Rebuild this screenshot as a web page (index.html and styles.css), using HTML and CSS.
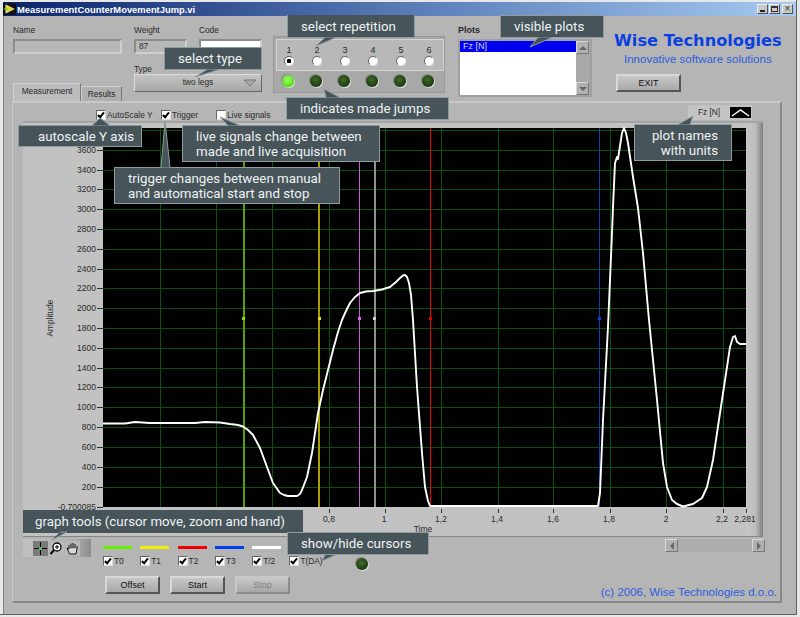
FILE: index.html
```html
<!DOCTYPE html>
<html lang="en">
<head>
    <meta charset="UTF-8">
    <title>MeasurementCounterMovementJump.vi</title>
    <link rel="stylesheet" href="styles.css">
</head>
<body>
<div class="window">
    <div class="titlebar">
        <svg class="app-icon" width="13" height="12" viewBox="0 0 14 12">
            <rect width="14" height="12" fill="#111"/>
            <path d="M3 1.5 L12 6 L3 10.5 Z" fill="#e8d820" stroke="#fff" stroke-width=".6"/>
            <path d="M1 6 H5" stroke="#4cd040" stroke-width="1.4"/>
        </svg>
        <span class="title-text">MeasurementCounterMovementJump.vi</span>
        <div class="win-buttons">
            <span class="win-btn"><i class="min"></i></span>
            <span class="win-btn"><i class="max"></i></span>
            <span class="win-btn win-close">&#215;</span>
        </div>
    </div>

    <div class="panel">
        <div class="top">
            <div class="fields">
                <label class="field f-name">Name<span class="box"></span></label>
                <label class="field f-weight">Weight<span class="box">87</span></label>
                <label class="field f-code">Code<span class="box box-white"></span></label>
                <div class="tabs">
                    <span class="tab tab-active">Measurement</span>
                    <span class="tab">Results</span>
                </div>
                <div class="field f-type">Type
                    <div class="dropdown">two legs
                        <svg class="drop-arrow" width="14" height="8" viewBox="0 0 14 8"><path d="M1 1 H13 L7 7 Z" fill="#a8a8a8" stroke="#777"/></svg>
                    </div>
                </div>
            </div>

            <div class="reps">
                <div class="reps-row reps-radios">
                    <div class="rep">1<span class="radio radio-on"></span></div>
                    <div class="rep">2<span class="radio"></span></div>
                    <div class="rep">3<span class="radio"></span></div>
                    <div class="rep">4<span class="radio"></span></div>
                    <div class="rep">5<span class="radio"></span></div>
                    <div class="rep">6<span class="radio"></span></div>
                </div>
                <div class="reps-row reps-leds">
                    <div class="rep"><span class="led led-on"></span></div>
                    <div class="rep"><span class="led"></span></div>
                    <div class="rep"><span class="led"></span></div>
                    <div class="rep"><span class="led"></span></div>
                    <div class="rep"><span class="led"></span></div>
                    <div class="rep"><span class="led"></span></div>
                </div>
            </div>

            <div class="plots">
                <div class="plots-label">Plots</div>
                <div class="listbox">
                    <div class="list-items"><div class="list-sel">Fz [N]</div></div>
                    <div class="list-scroll">
                        <span class="scroll-btn"><i class="tri-up"></i></span>
                        <span class="scroll-btn"><i class="tri-down"></i></span>
                    </div>
                </div>
            </div>

            <div class="brand">
                <div class="brand-name">Wise Technologies</div>
                <div class="brand-sub">Innovative software solutions</div>
                <button class="lv-btn btn-exit">EXIT</button>
            </div>
        </div>

        <div class="tabpage">
            <div class="checks">
                <label class="check check-auto"><span class="cb on"></span>AutoScale Y</label>
                <label class="check check-trig"><span class="cb on"></span>Trigger</label>
                <label class="check check-live"><span class="cb"></span>Live signals</label>
                <div class="plot-legend">Fz [N]
                    <svg width="21" height="11" viewBox="0 0 21 11"><rect width="21" height="11" fill="#000"/><path d="M2 9 L10.500 3 L19 9" fill="none" stroke="#fff" stroke-width="1.500"/></svg>
                </div>
            </div>

            <svg class="graph" width="740" height="416" viewBox="23 121 740 416">
                <defs>
                    <linearGradient id="edge" x1="0" x2="1" y1="0" y2="0">
                        <stop offset="0" stop-color="#c6c6c6"/>
                        <stop offset=".55" stop-color="#bdbdbd"/>
                        <stop offset="1" stop-color="#7e7e7e"/>
                    </linearGradient>
                </defs>
                <rect x="23" y="121" width="740" height="416" fill="#c2c2c2"/>
                <rect x="746" y="121" width="17" height="416" fill="url(#edge)"/>
                <rect x="23" y="121" width="740" height="2" fill="#a4a4a4"/>
                <rect x="23" y="536" width="740" height="1" fill="#858585"/>
                <rect x="103" y="128" width="643" height="379" fill="#000"/>
                <path class="grid" d="M103 130.500H746M103 150.500H746M103 170.500H746M103 189.500H746M103 209.500H746M103 229.500H746M103 249.500H746M103 269.500H746M103 288.500H746M103 308.500H746M103 328.500H746M103 348.500H746M103 368.500H746M103 387.500H746M103 407.500H746M103 427.500H746M103 447.500H746M103 467.500H746M103 487.500H746M160.500 128V507M216.500 128V507M272.500 128V507M329.500 128V507M385.500 128V507M441.500 128V507M498.500 128V507M553.500 128V507M610.500 128V507M666.500 128V507M723.500 128V507"/>
                <path class="ticks" d="M97 150.500H103M97 170.500H103M97 189.500H103M97 209.500H103M97 229.500H103M97 249.500H103M97 269.500H103M97 288.500H103M97 308.500H103M97 328.500H103M97 348.500H103M97 368.500H103M97 387.500H103M97 407.500H103M97 427.500H103M97 447.500H103M97 467.500H103M97 487.500H103M97 507.500H103M329.500 509V513M385.500 509V513M441.500 509V513M498.500 509V513M553.500 509V513M610.500 509V513M666.500 509V513M723.500 509V513M746.500 509V513"/>
                <g class="ylabels">
                    <text x="96" y="153">3600</text><text x="96" y="173">3400</text><text x="96" y="192">3200</text>
                    <text x="96" y="212">3000</text><text x="96" y="232">2800</text><text x="96" y="252">2600</text>
                    <text x="96" y="272">2400</text><text x="96" y="291">2200</text><text x="96" y="311">2000</text>
                    <text x="96" y="331">1800</text><text x="96" y="351">1600</text><text x="96" y="371">1400</text>
                    <text x="96" y="390">1200</text><text x="96" y="410">1000</text><text x="96" y="430">800</text>
                    <text x="96" y="450">600</text><text x="96" y="470">400</text><text x="96" y="490">200</text>
                    <text x="96" y="510">-0,700085</text>
                </g>
                <g class="xlabels">
                    <text x="329" y="522">0,8</text><text x="384" y="522">1</text><text x="441" y="522">1,2</text>
                    <text x="497" y="522">1,4</text><text x="553" y="522">1,6</text><text x="609" y="522">1,8</text>
                    <text x="666" y="522">2</text><text x="722" y="522">2,2</text><text x="745" y="522">2,281</text>
                    <text x="423" y="532">Time</text>
                </g>
                <text class="yname" transform="translate(53 318) rotate(-90)">Amplitude</text>

                <path class="cur" stroke="#5a9e00" stroke-width="2" d="M244 128V507"/>
                <path class="cur" stroke="#a8a000" stroke-width="2" d="M319 128V507"/>
                <path class="cur" stroke="#c060c8" d="M359.500 128V507"/>
                <path class="cur" stroke="#909090" stroke-width="2" d="M375 128V507"/>
                <path class="cur" stroke="#f00000" d="M430.500 128V507"/>
                <path class="cur" stroke="#1040b0" d="M599.500 128V507"/>
                <rect x="242" y="317" width="3" height="3" fill="#7fe000"/>
                <rect x="318" y="317" width="3" height="3" fill="#e8e000"/>
                <rect x="358" y="317" width="3" height="3" fill="#e860e8"/>
                <rect x="373" y="317" width="3" height="3" fill="#d0d0d0"/>
                <rect x="429" y="317" width="3" height="3" fill="#e00000"/>
                <rect x="598" y="317" width="3" height="3" fill="#1040e0"/>

                <polyline class="signal" points="103,423.500 125,423.500 135,422 150,423 195,423 205,422 220,422.500 230,424 238,425 243,426.500 248,430 253,435 260,448 267,467 273,483 280,493 284,495 288,496 297,496 300,494 302,490 307,477 312,453 318,413 323,390 333,350 338,332 342,320 346,311 350,303 355,297 360,293 366,291.500 373,291 382,289.500 390,287 396,282 400,278 403,275.500 405,275 407,277 409,283 411,295 413,320 417,387 422,453 425,487 428,501 430,506 598,506 600,493 603,420 608,327 612,233 613,207 615,163 617,157 618,159 622,133 624,128 626,133 628,143 633,177 638,208 643,253 649,320 657,400 663,463 667,487 672,500 677,504 683,506.500 693,504 702,498 707,487 713,460 720,413 727,367 730,347 733,337 735,336 737,342 740,344 746,344"/>
            </svg>

            <div class="lower">
                <div class="lower-left">
                    <div class="tools">
                        <span class="tool tool-on"><svg width="15" height="15" viewBox="0 0 15 15"><path d="M7.500 1V14M1 7.500H14" stroke="#000" fill="none"/><circle cx="7.500" cy="7.500" r="1.500" fill="#40e040"/></svg></span>
                        <span class="tool"><svg width="15" height="15" viewBox="0 0 15 15"><circle cx="8" cy="6" r="4" fill="#fff" stroke="#000" stroke-width="1.300"/><path d="M6 6H10M8 4V8" stroke="#000"/><path d="M5 9L1.500 13" stroke="#000" stroke-width="2"/></svg></span>
                        <span class="tool"><svg width="15" height="15" viewBox="0 0 15 15"><path d="M4 8V4M6 7V2.500M8 7V2M10 7V3M12 8V5M4 8L2 7L4.500 13H11L12 8" fill="#d8d8d8" stroke="#000" stroke-width=".9"/></svg></span>
                    </div>
                </div>
                <div class="lower-main">
                    <div class="cursor-grid">
                        <span class="swatch s-green"></span><span class="swatch s-yellow"></span><span class="swatch s-red"></span><span class="swatch s-blue"></span><span class="swatch s-white"></span><span></span>
                        <label class="check"><span class="cb on"></span>T0</label>
                        <label class="check"><span class="cb on"></span>T1</label>
                        <label class="check"><span class="cb on"></span>T2</label>
                        <label class="check"><span class="cb on"></span>T3</label>
                        <label class="check"><span class="cb on"></span>T/2</label>
                        <label class="check"><span class="cb on"></span>T(DA)</label>
                    </div>
                    <div class="actions">
                        <button class="lv-btn">Offset</button>
                        <button class="lv-btn">Start</button>
                        <button class="lv-btn lv-off">Stop</button>
                    </div>
                </div>
                <span class="led led-cursor"></span>
                <div class="lower-right">
                    <div class="hscroll">
                        <span class="scroll-btn"><i class="tri-left"></i></span>
                        <span class="scroll-btn"><i class="tri-right"></i></span>
                    </div>
                    <div class="copyright">(c) 2006, Wise Technologies d.o.o.</div>
                </div>
            </div>
        </div>
    </div>
</div>

<!-- help callouts laid over the panel -->
<div class="callout c-rep">select repetition</div>
<div class="callout c-type">select type</div>
<div class="callout c-jumps">indicates made jumps</div>
<div class="callout c-plots">visible plots</div>
<div class="callout c-auto">autoscale Y axis</div>
<div class="callout c-live">live signals change between<br>made and live acquisition</div>
<div class="callout c-trig">trigger changes between manual<br>and automatical start and stop</div>
<div class="callout c-names">plot names<br>with units</div>
<div class="callout c-tools">graph tools (cursor move, zoom and hand)</div>
<div class="callout c-show">show/hide cursors</div>
<svg class="tails" width="800" height="617" viewBox="0 0 800 617">
    <path d="M325 37.500 L316 46 L336 37.500"/>
    <path d="M207 69.500 L195 77 L219 69.500"/>
    <path d="M340 97.500 L324 89 L326 97.500"/>
    <path d="M538 37.500 L530 47 L552 37.500"/>
    <path d="M92 125.500 L100 118 L110 125.500"/>
    <path d="M228 125.500 L220 117 L240 125.500"/>
    <path d="M161 167.500 L165 121 L170 167.500"/>
    <path d="M678 124.500 L693 116 L690 124.500"/>
    <path d="M52 540 L67 532 L60 532"/>
    <path d="M325 555 L322 561 L335 555"/>
</svg>
</body>
</html>
```

FILE: styles.css
```css
html, body {
    margin: 0;
    padding: 0;
}

body {
    position: relative;
    width: 800px;
    height: 617px;
    overflow: hidden;
    background-color: #e8e8e8;
    font-family: "Liberation Sans", Arial, sans-serif;
    font-size: 8.300px;
    color: #2a2a2a;
}

.window {
    display: flex;
    flex-direction: column;
    box-sizing: border-box;
    height: 615px;
    margin-right: 3px;
    padding: 2px 0 0 3px;
    border-bottom: 1px solid #606060;
    border-right: 1px solid #606060;
}

/* title bar */
.titlebar {
    display: flex;
    align-items: center;
    flex: none;
    height: 14px;
    padding: 0 3px 0 0;
    background: linear-gradient(to right, #0a246a, #5f82bd 55%, #a6caf0);
    color: white;
}

.app-icon {
    flex: none;
    margin-right: 1px;
}

.title-text {
    font-size: 9.400px;
    font-weight: bold;
}

.win-buttons {
    display: flex;
    margin-left: auto;
    gap: 1px;
}

.win-btn {
    display: flex;
    align-items: center;
    justify-content: center;
    box-sizing: border-box;
    width: 11px;
    height: 10px;
    background-color: #c8c8c8;
    border: 1px solid;
    border-color: #eee #555 #555 #eee;
    color: #333;
    font-size: 10px;
    line-height: 8px;
}

.win-btn .min {
    width: 5px;
    height: 2px;
    margin-top: 4px;
    background-color: #222;
}

.win-btn .max {
    box-sizing: border-box;
    width: 7px;
    height: 6px;
    border: 1px solid #333;
    border-top-width: 2px;
}

.win-close {
    margin-left: 1px;
}

/* panel */
.panel {
    flex: 1;
    background-color: #b5b5b5;
    border-left: 1px solid #808080;
}

.top {
    display: flex;
    box-sizing: border-box;
    height: 85px;
    padding-left: 9px;
}

.fields {
    display: grid;
    grid-template-columns: 109px 53px 63px;
    grid-template-rows: 37px 48px;
    column-gap: 12px;
    width: 249px;
    flex: none;
}

.field {
    display: block;
    padding-top: 8px;
    line-height: 13px;
}

.box {
    display: block;
    box-sizing: border-box;
    height: 15px;
    margin-top: 2px;
    padding-left: 3px;
    background-color: #b8b8b8;
    border: 2px solid;
    border-color: #8c8c8c #d0d0d0 #d0d0d0 #8c8c8c;
    line-height: 11px;
}

.box-white {
    background-color: white;
}

.tabs {
    display: flex;
    align-items: flex-end;
}

.tab {
    box-sizing: border-box;
    width: 41px;
    height: 15px;
    line-height: 14px;
    text-align: center;
    background-color: #b0b0b0;
    border: 1px solid #d0d0d0;
    border-right-color: #777;
    border-bottom: none;
}

.tab-active {
    width: 68px;
    height: 18px;
    line-height: 15px;
    background-color: #bcbcbc;
}

.f-type {
    grid-column: 2 / 4;
    padding-top: 10px;
}

.dropdown {
    position: relative;
    box-sizing: border-box;
    height: 18px;
    margin-top: -2px;
    background: linear-gradient(#c4c4c4, #a8a8a8);
    border: 1px solid;
    border-color: #dcdcdc #666 #666 #dcdcdc;
    line-height: 15px;
    text-align: center;
}

.drop-arrow {
    position: absolute;
    right: 4px;
    top: 4px;
}

.reps {
    flex: none;
    box-sizing: border-box;
    width: 172px;
    height: 57px;
    margin: 20px 0 0 11px;
    padding: 2px 0 0 2px;
    background-color: #a8a8a8;
    border: 1px solid #999;
}

.reps-row {
    display: flex;
}

.reps-radios {
    height: 30px;
    background-color: #b8b8b8;
    border: 1px solid #d4d4d4;
}

.reps-leds {
    height: 19px;
    align-items: center;
}

.rep {
    display: flex;
    flex: none;
    flex-direction: column;
    align-items: center;
    width: 28px;
    padding-top: 5px;
    line-height: 11px;
    font-size: 9px;
}

.rep:first-child {
    margin-left: -2px;
}

.reps-leds .rep {
    padding-top: 0;
}

.radio {
    box-sizing: border-box;
    width: 10px;
    height: 10px;
    border-radius: 50%;
    background-color: white;
    border: 1px solid #666;
    border-right-color: #eee;
    border-bottom-color: #eee;
}

.radio-on {
    background: radial-gradient(circle, #000 0 2px, #fff 2.500px);
}

.led {
    width: 12px;
    height: 12px;
    border-radius: 50%;
    background: radial-gradient(circle at 45% 40%, #3f6b28, #1d3a10 70%);
    box-shadow: 1px 1px 0 #ddd, -1px -1px 0 #888;
}

.led-on {
    background: radial-gradient(circle at 45% 40%, #a8ff70, #48e010 70%);
}

.plots {
    flex: none;
    width: 142px;
    margin-left: 11px;
}

.plots-label {
    margin: 8px 0 2px 2px;
    font-size: 9px;
    font-weight: bold;
    line-height: 13px;
}

.listbox {
    display: flex;
    box-sizing: border-box;
    width: 134px;
    height: 58px;
    margin-left: 2px;
    background-color: #a8a8a8;
    border: 2px solid #a0a0a0;
}

.list-items {
    width: 116px;
    flex: none;
    background-color: white;
}

.list-sel {
    height: 11px;
    padding-left: 3px;
    line-height: 11px;
    background-color: #0000f0;
    color: #d8d8ff;
    font-size: 9px;
}

.list-scroll {
    display: flex;
    flex-direction: column;
    justify-content: space-between;
    flex: 1;
}

.scroll-btn {
    display: flex;
    align-items: center;
    justify-content: center;
    box-sizing: border-box;
    width: 13px;
    height: 13px;
    background-color: #b0b0b0;
    border: 1px solid;
    border-color: #d8d8d8 #777 #777 #d8d8d8;
}

.scroll-btn i {
    width: 0;
    height: 0;
    border: 4px solid transparent;
}

.tri-up {
    border-bottom-color: #666 !important;
    margin-top: -4px;
}

.tri-down {
    border-top-color: #666 !important;
    margin-top: 4px;
}

.tri-left {
    border-right-color: #666 !important;
    margin-left: -4px;
}

.tri-right {
    border-left-color: #666 !important;
    margin-left: 4px;
}

.brand {
    flex: none;
    width: 172px;
    margin-left: 16px;
    padding-top: 15px;
}

.brand-name {
    font-family: "DejaVu Sans", sans-serif;
    font-size: 16.200px;
    font-weight: bold;
    line-height: 20px;
    color: #0c3fe0;
    white-space: nowrap;
}

.brand-sub {
    margin-left: 10px;
    font-size: 11.500px;
    line-height: 16px;
    color: #2c5fdc;
    white-space: nowrap;
}

.lv-btn {
    box-sizing: border-box;
    width: 55px;
    height: 18px;
    padding: 0;
    background: linear-gradient(#c8c8c8, #a8a8a8);
    border: 2px solid;
    border-color: #d8d8d8 #555 #555 #d8d8d8;
    font-family: "Liberation Sans", Arial, sans-serif;
    font-size: 9px;
    color: #111;
}

.btn-exit {
    display: block;
    width: 65px;
    margin: 7px 0 0 2px;
}

.lv-off {
    color: #808080;
    border-color: #c8c8c8 #8c8c8c #8c8c8c #c8c8c8;
}

/* tab page */
.tabpage {
    box-sizing: border-box;
    width: 770px;
    height: 502px;
    margin-left: 8px;
    background-color: #b5b5b5;
    border-top: 2px solid #c8c8c8;
    border-left: 1px solid #c8c8c8;
    border-right: 2px solid #888;
    border-bottom: 2px solid #888;
}

.checks {
    display: flex;
    align-items: center;
    box-sizing: border-box;
    height: 18px;
    padding: 5px 0 0 83px;
}

.check {
    display: flex;
    align-items: center;
    gap: 1px;
    white-space: nowrap;
}

.cb {
    position: relative;
    flex: none;
    box-sizing: border-box;
    width: 10px;
    height: 10px;
    background-color: white;
    border: 1px solid #666;
    border-right-color: #ddd;
    border-bottom-color: #ddd;
}

.cb.on::after {
    content: "";
    position: absolute;
    left: 2px;
    top: 0;
    width: 2px;
    height: 5px;
    border: solid #000;
    border-width: 0 2px 2px 0;
    transform: rotate(40deg);
}

.check-auto {
    width: 65px;
}

.check-trig {
    width: 55px;
}

.plot-legend {
    display: flex;
    align-items: center;
    justify-content: space-between;
    box-sizing: border-box;
    width: 64px;
    height: 15px;
    margin-top: -5px;
    margin-left: auto;
    margin-right: 28px;
    padding: 0 1px 0 10px;
    background-color: #c4c4c4;
}

.graph {
    display: block;
    margin-left: 10px;
}

.grid {
    stroke: #0a520a;
    stroke-width: 1;
    fill: none;
}

.ticks {
    stroke: #333;
    stroke-width: 1;
    fill: none;
}

.ylabels text {
    font-size: 8.500px;
    text-anchor: end;
    fill: #2a2a2a;
}

.xlabels text {
    font-size: 8.500px;
    text-anchor: middle;
    fill: #2a2a2a;
}

.yname {
    font-size: 8.300px;
    text-anchor: middle;
    fill: #2a2a2a;
}

.cur {
    fill: none;
}

.signal {
    fill: none;
    stroke: #fff;
    stroke-width: 1.900;
    stroke-linejoin: round;
}

.lower {
    position: relative;
    display: flex;
    height: 64px;
    padding-left: 10px;
}

.lower-left {
    flex: none;
    width: 82px;
    padding-top: 2px;
}

.tools {
    display: flex;
    align-items: center;
    gap: 1px;
    box-sizing: border-box;
    width: 68px;
    height: 18px;
    padding-left: 10px;
    background: linear-gradient(to right, #c0c0c0, #b0b0b0 75%, #8c8c8c);
}

.tool {
    display: flex;
    width: 15px;
    height: 15px;
    background-color: #b8b8b8;
}

.tool-on {
    background-color: #7a7a7a;
}

.lower-main {
    flex: none;
    width: 255px;
}

.cursor-grid {
    display: grid;
    grid-template-columns: repeat(6, 37.300px);
    grid-template-rows: 13px 14px;
    align-items: center;
    margin-left: -2px;
    padding-top: 4px;
}

.swatch {
    width: 29px;
    height: 3px;
    background-color: white;
}

.s-green { background-color: #66f000; }
.s-yellow { background-color: #f0f000; }
.s-red { background-color: #f00000; }
.s-blue { background-color: #0040f0; }

.actions {
    display: flex;
    gap: 10px;
    margin-top: 8px;
}

.led-cursor {
    flex: none;
    margin: 21px 0 0 -4px;
}

.lower-right {
    flex: none;
    width: 415px;
    margin-left: -3px;
    padding-top: 2px;
}

.hscroll {
    display: flex;
    justify-content: space-between;
    width: 100px;
    margin-left: 300px;
    background-color: #adadad;
}

.copyright {
    margin-top: 34px;
    margin-right: 3px;
    text-align: right;
    font-size: 11.500px;
    color: #2c5fdc;
    white-space: nowrap;
}

/* help callouts */
.callout {
    position: absolute;
    display: flex;
    align-items: center;
    box-sizing: border-box;
    padding: 0 10px;
    background-color: #47555b;
    border: 1px solid #8c9ca0;
    color: #eef2f2;
    font-family: Roboto, sans-serif;
    font-size: 13.300px;
    line-height: 15px;
    white-space: nowrap;
}

.c-rep { left: 287px; top: 15px; width: 128px; height: 23px; padding-left: 13px; border-top: none; }
.c-type { left: 164px; top: 47px; width: 98px; height: 23px; padding-left: 13px; }
.c-jumps { left: 286px; top: 97px; width: 163px; height: 23px; padding-left: 13px; }
.c-plots { left: 500px; top: 15px; width: 104px; height: 23px; padding-left: 13px; }
.c-auto { left: 18px; top: 125px; width: 124px; height: 22px; padding-left: 19px; }
.c-live { left: 182px; top: 125px; width: 198px; height: 37px; padding-left: 13px; }
.c-trig { left: 114px; top: 167px; width: 226px; height: 37px; padding-left: 13px; }
.c-names { left: 634px; top: 124px; width: 98px; height: 37px; justify-content: flex-end; text-align: right; padding-right: 13px; }
.c-tools { left: 23px; top: 510px; width: 280px; height: 23px; padding-left: 12px; border: none; }
.c-show { left: 287px; top: 532px; width: 142px; height: 23px; padding-left: 13px; }

.tails {
    position: absolute;
    left: 0;
    top: 0;
    pointer-events: none;
}

.tails path {
    fill: #47555b;
    stroke: #8c9ca0;
    stroke-width: 1;
}
```
